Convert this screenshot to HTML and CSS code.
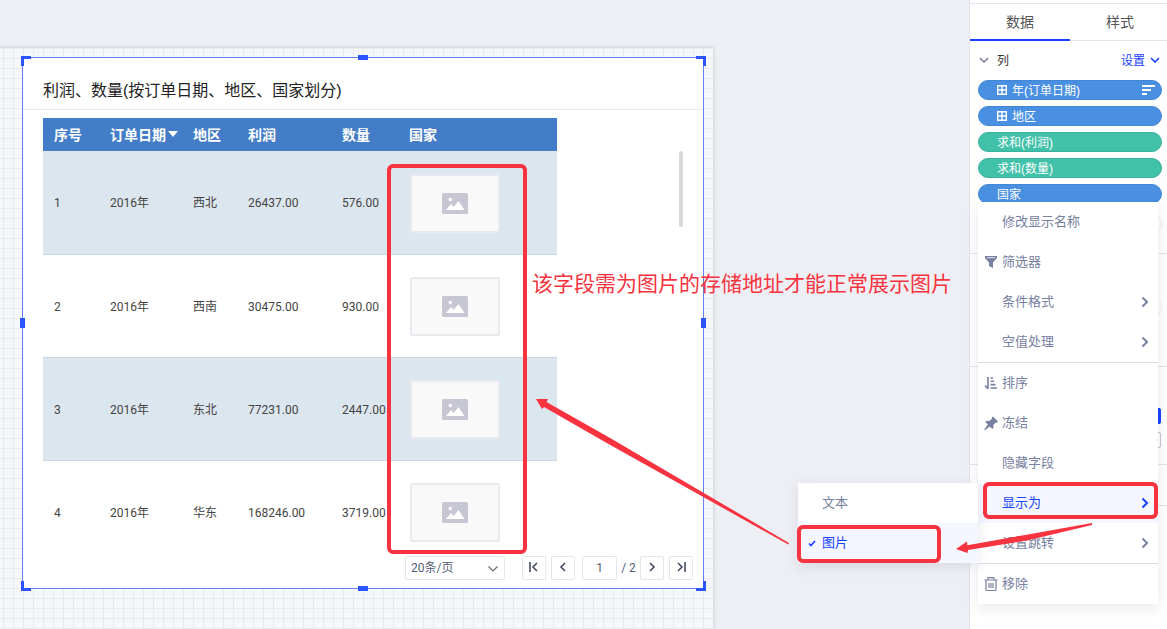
FILE: index.html
```html
<!DOCTYPE html>
<html lang="zh-CN">
<head>
<meta charset="utf-8">
<title>利润、数量</title>
<link rel="stylesheet" href="styles.css">
</head>
<body>
<svg class="defs" aria-hidden="true">
  <symbol id="chev-right" viewBox="0 0 8 12"><path d="M1.500 1.500L6 6 1.500 10.500" fill="none" stroke="currentColor" stroke-width="2"/></symbol>
  <symbol id="chev-down" viewBox="0 0 10 6"><path d="M1 1l4 4 4-4" fill="none" stroke="currentColor" stroke-width="1.600"/></symbol>
  <symbol id="grid-plus" viewBox="0 0 10 10"><path d="M.7.7h8.600v8.600H.7zM5 1v8M1 5h8" fill="none" stroke="currentColor" stroke-width="1.400"/></symbol>
  <symbol id="picture" viewBox="0 0 26 21"><rect width="26" height="21" rx="1.500" fill="#c7c7d4"/><circle cx="8.300" cy="6.500" r="1.700" fill="#fff"/><path d="M4 17l5-6 2.600 3L16.500 8l6 9z" fill="#fff"/></symbol>
</svg>
<div class="app">
  <main class="canvas">
    <div class="board">
      <section class="widget">
        <h1 class="widget-title">利润、数量(按订单日期、地区、国家划分)</h1>
        <div class="table-area">
          <table class="data">
            <colgroup><col class="c-no"><col class="c-date"><col class="c-area"><col class="c-profit"><col class="c-qty"><col class="c-country"></colgroup>
            <thead><tr><th>序号</th><th>订单日期<svg class="caret" viewBox="0 0 10 6"><path d="M0 0h10L5 6z" fill="#fff"/></svg></th><th>地区</th><th>利润</th><th>数量</th><th>国家</th></tr></thead>
            <tbody>
              <tr><td>1</td><td>2016年</td><td>西北</td><td>26437.00</td><td>576.00</td><td><div class="thumb"><svg><use href="#picture"/></svg></div></td></tr>
              <tr><td>2</td><td>2016年</td><td>西南</td><td>30475.00</td><td>930.00</td><td><div class="thumb"><svg><use href="#picture"/></svg></div></td></tr>
              <tr><td>3</td><td>2016年</td><td>东北</td><td>77231.00</td><td>2447.00</td><td><div class="thumb"><svg><use href="#picture"/></svg></div></td></tr>
              <tr><td>4</td><td>2016年</td><td>华东</td><td>168246.00</td><td>3719.00</td><td><div class="thumb"><svg><use href="#picture"/></svg></div></td></tr>
            </tbody>
          </table>
          <div class="scroll-thumb"></div>
        </div>
        <nav class="pager" aria-label="分页">
          <div class="size"><select aria-label="每页条数"><option>20条/页</option></select><svg class="size-arrow" viewBox="0 0 10 6"><path d="M.5.5L5 5 9.500.5" fill="none" stroke="#666" stroke-width="1.100"/></svg></div>
          <div class="pair">
            <button aria-label="首页"><svg viewBox="0 0 10 10"><path d="M1 0v10M8 1L4 5l4 4"/></svg></button>
            <button aria-label="上一页"><svg viewBox="0 0 10 10"><path d="M7 1L3 5l4 4"/></svg></button>
          </div>
          <input class="page-no" aria-label="页码" value="1"><span class="total">/ 2</span>
          <div class="pair">
            <button aria-label="下一页"><svg viewBox="0 0 10 10"><path d="M3 1l4 4-4 4"/></svg></button>
            <button aria-label="末页"><svg viewBox="0 0 10 10"><path d="M9 0v10M2 1l4 4-4 4"/></svg></button>
          </div>
        </nav>
        <i class="corner tl"></i><i class="corner tr"></i><i class="corner bl"></i><i class="corner br"></i>
        <i class="knob top"></i><i class="knob bottom"></i><i class="knob left"></i><i class="knob right"></i>
      </section>
    </div>
  </main>
  <aside class="side">
    <div class="tabs"><button class="tab active">数据</button><button class="tab">样式</button></div>
    <section class="zone columns">
      <div class="zone-head"><svg class="fold"><use href="#chev-down"/></svg><span>列</span><button class="setting">设置<svg class="fold"><use href="#chev-down"/></svg></button></div>
      <div class="pills">
        <button class="pill"><svg class="plus"><use href="#grid-plus"/></svg>年(订单日期)<svg class="sort" viewBox="0 0 13 10"><path d="M0 1h13M0 5h9M0 9h5" stroke="#fff" stroke-width="2"/></svg></button>
        <button class="pill"><svg class="plus"><use href="#grid-plus"/></svg>地区</button>
        <button class="pill measure">求和(利润)</button>
        <button class="pill measure">求和(数量)</button>
        <button class="pill">国家</button>
      </div>
      <div class="drop"></div>
    </section>
    <section class="zone filter"><div class="drop"></div></section>
    <section class="zone options"><i class="option on"></i><i class="option"></i></section>
    <section class="zone short"></section>
    <div class="menu">
      <button class="item">修改显示名称</button>
      <button class="item"><svg class="icon" viewBox="0 0 14 16"><path d="M1 2h12v2L9 8.500V14l-4-2V8.500L1 4z" fill="currentColor"/><path d="M3 3.700h8" stroke="#fff" stroke-width=".8"/></svg>筛选器</button>
      <button class="item">条件格式<svg class="more"><use href="#chev-right"/></svg></button>
      <button class="item">空值处理<svg class="more"><use href="#chev-right"/></svg></button>
      <hr>
      <button class="item"><svg class="icon" viewBox="0 0 14 16"><path d="M4 2v11.500M1 10.500l3 3.500M6.500 3H9M6.500 6.300h3.500M6.500 9.600h5M6.500 13H13" fill="none" stroke="currentColor" stroke-width="1.600"/></svg>排序</button>
      <button class="item"><svg class="icon" viewBox="0 0 14 16"><path d="M9 1.500l5 5-1.200 1.200-1-.2-2.500 2.500.2 2.800-1.200 1.200-2.600-2.600L.8 15.200l-.6-.6 3.700-5L1.300 7l1.200-1.200 2.800.2 2.700-2.500-.2-1z" fill="currentColor"/></svg>冻结</button>
      <button class="item">隐藏字段</button>
      <div class="branch">
        <button class="item active">显示为<svg class="more"><use href="#chev-right"/></svg></button>
        <div class="submenu">
          <button class="item">文本</button>
          <button class="item active"><svg class="tick" viewBox="0 0 8 7"><path d="M1 3.500l2 2L7 1" fill="none" stroke="currentColor" stroke-width="1.700"/></svg>图片</button>
        </div>
      </div>
      <button class="item">设置跳转<svg class="more"><use href="#chev-right"/></svg></button>
      <hr>
      <button class="item"><svg class="icon" viewBox="0 0 14 16"><path d="M.5 4h13M4 4V1.700h6V4M2 4v9.500q0 1 1 1h8q1 0 1-1V4M5 7v5M7 7v5M9 7v5" fill="none" stroke="currentColor" stroke-width="1.200"/></svg>移除</button>
    </div>
  </aside>
</div>
<div class="notes">
  <svg class="marks" width="1167" height="629" aria-hidden="true">
    <g fill="none" stroke="#f83340" stroke-width="4"><rect x="389" y="166" width="136" height="386" rx="4"/><rect x="799" y="527" width="140" height="34" rx="4"/><rect x="985" y="484" width="171" height="33" rx="4"/></g>
    <g fill="#f83340"><path d="M536 399l12 0-1.500 3L611 438.500 789 543l-.7 1.500L608.500 444 544 407l-2 2z"/><path d="M956 549l11-7.500.3 3.700L1025 535l67-12v2l-65 15.500-59 9.500-.5 3z"/></g>
  </svg>
  <p class="note">该字段需为图片的存储地址才能正常展示图片</p>
</div>
</body>
</html>
```
FILE: styles.css
```css
* { box-sizing: border-box; }
body { margin: 0; font-family: "Liberation Sans", "Noto Sans CJK SC", sans-serif; font-size: 12px; color: #333; }
button, input, select { font: inherit; color: inherit; margin: 0; border: 0; padding: 0; background: none; }
svg { flex: none; }
.defs { position: absolute; width: 0; height: 0; }
.app { display: flex; height: 100vh; overflow: hidden; }

.canvas { flex: 1; display: flex; background: #eeeff4; padding: 48px 256px 0 0; }
.board { flex: 1; display: flex; padding: 9px 9px 40px 22px; background-color: #f6f7fb; background-image: linear-gradient(#e8eaef 1px, transparent 1px), linear-gradient(90deg, #e8eaef 1px, transparent 1px); background-size: 10px 10px; background-position: 3px 0; box-shadow: 0 0 4px #0003; }
.widget { position: relative; flex: 1; display: flex; flex-direction: column; background: #fff; border: 1px solid #6583ee; }
.widget-title { margin: 0; padding: 21px 20px 6px; font-size: 16px; line-height: 24px; font-weight: 400; color: #222; border-bottom: 1px solid #e8e8e8; }
.table-area { flex: 1; min-height: 0; overflow: hidden; display: flex; justify-content: space-between; padding: 8px 20px 0; }
.data { table-layout: fixed; width: 514px; height: 445px; border-collapse: collapse; font-family: Roboto, "Noto Sans CJK SC", sans-serif; }
.c-no { width: 56px; } .c-date { width: 83px; } .c-area { width: 55px; } .c-profit { width: 94px; } .c-qty { width: 67px; }
.data th { height: 33px; padding: 0 0 0 11px; background: #447dc7; color: #fff; font-size: 14px; line-height: 20px; text-align: left; white-space: nowrap; }
.data td { height: 103px; padding: 2px 0 0 11px; line-height: 18px; border-bottom: 1px solid #ccd8e4; color: #444; }
.data tr:nth-child(even) td { background: #fff; }
.data tbody tr:nth-child(odd) td { background: #dce6ee; }
.caret { width: 10px; height: 6px; margin-left: 2px; vertical-align: 3px; }
.thumb { width: 90px; height: 59px; margin-left: 1px; display: flex; align-items: center; justify-content: center; background: #f9f9f9; border: 2px solid #e9e9f0; border-radius: 2px; }
.thumb svg { width: 26px; height: 21px; }
.scroll-thumb { width: 4px; height: 76px; margin-top: 33px; border-radius: 2px; background: #d9d9d9; }
.pager { display: flex; align-items: center; justify-content: flex-end; padding: 0 10px 8px; font-size: 12px; font-family: Roboto, "Noto Sans CJK SC", sans-serif; color: #555c75; }
.pager button, .page-no, .size select { height: 24px; border: 1px solid #e6e6ea; border-radius: 2px; background: #fff; }
.size { position: relative; width: 100px; margin-right: 17px; display: flex; }
.size select { appearance: none; flex: 1; padding: 0 5px; }
.size-arrow { position: absolute; right: 7px; top: 10px; width: 10px; height: 6px; }
.pair { display: flex; gap: 5px; }
.pager button { width: 24px; display: flex; align-items: center; justify-content: center; padding-bottom: 2px; }
.pager button svg { width: 10px; height: 10px; fill: none; stroke: #444b60; stroke-width: 1.600; }
.page-no { width: 35px; margin-left: 7px; text-align: center; }
.total { width: 23px; text-align: center; white-space: nowrap; }
.corner { position: absolute; width: 10px; height: 10px; border: 0 solid #2b56ff; }
.tl { left: -2px; top: -2px; border-width: 3px 0 0 3px; }
.tr { right: -3px; top: -2px; border-width: 3px 3px 0 0; }
.bl { left: -2px; bottom: -3px; border-width: 0 0 3px 3px; }
.br { right: -3px; bottom: -3px; border-width: 0 3px 3px 0; }
.knob { position: absolute; background: #2b56ff; }
.top, .bottom { width: 10px; height: 5px; left: calc(50% - 5px); }
.top { top: -3px; } .bottom { bottom: -3px; }
.left, .right { width: 5px; height: 10px; top: calc(50% - 5px); }
.left { left: -3px; } .right { right: -3px; }

.side { position: relative; width: 198px; flex: none; border-left: 1px solid #e2e3ea; background: #fff; padding-top: 3px; }
.tabs { display: flex; height: 38px; border-top: 1px solid #e4e4ec; border-bottom: 1px solid #e4e4ec; }
.tab { flex: none; width: 100px; height: 37px; padding-bottom: 3px; font-size: 14px; color: #555; }
.tab.active { border-bottom: 2px solid #1742ff; padding-bottom: 1px; }
.zone { border-bottom: 1px solid #e4e4ec; padding: 0 5px 0 8px; }
.columns { height: 213px; }
.zone-head { display: flex; align-items: center; gap: 8px; height: 39px; padding-bottom: 2px; }
.fold { width: 10px; height: 6px; color: #777f99; margin-left: 1px; }
.setting { margin-left: auto; display: flex; align-items: center; gap: 5px; color: #1742ff; }
.setting .fold { color: #1742ff; margin-right: 2px; margin-left: 0; }
.pills { display: flex; flex-direction: column; gap: 6px; }
.pill { display: flex; align-items: center; gap: 5px; height: 20px; padding: 0 8px 2px 18px; border: 1px solid #4386d6; border-radius: 10px; background: #4a90e2; color: #fff; text-align: left; }
.pill.measure { background: #41c1a9; border-color: #3ab19a; }
.pill svg { margin-top: 2px; }
.plus { width: 10px; height: 10px; }
.sort { width: 13px; height: 10px; margin-left: auto; margin-right: -2px; }
.drop { height: 20px; margin-top: 10px; border: 1px dotted #ddd; border-radius: 10px; }
.filter { height: 113px; padding-top: 33px; }
.options { height: 98px; padding-top: 41px; padding-right: 6px; display: flex; flex-direction: column; align-items: flex-end; gap: 8px; }
.option { width: 16px; height: 16px; border: 1px solid #c2c4d0; border-radius: 2px; }
.option.on { background: #1742ff; border-color: #1742ff; }
.short { height: 41px; }

.menu { position: absolute; left: 8px; right: 9px; top: 202px; background: #fff; box-shadow: 0 4px 12px #2228491a; color: #7780a0; font-size: 13px; }
.item { position: relative; display: flex; align-items: center; width: 100%; height: 40px; padding: 0 9px 4px 24px; text-align: left; }
.item svg { margin-top: 4px; }
.item.active { background: #f4f7ff; color: #1742ff; }
.menu hr { margin: 0; border: 0; border-top: 1px solid #dcdde2; }
.icon { position: absolute; left: 6px; width: 14px; height: 16px; }
.more { width: 8px; height: 12px; margin-left: auto; }
.branch { position: relative; }
.submenu { position: absolute; right: 100%; top: 0; width: 100%; background: #fff; box-shadow: 0 4px 12px #2228491a; }
.tick { position: absolute; left: 10px; width: 8px; height: 7px; }

.notes { position: absolute; left: 0; top: 0; pointer-events: none; }
.marks { display: block; }
.note { position: absolute; left: 532px; top: 268px; margin: 0; font-size: 21px; line-height: 32px; white-space: nowrap; color: #f83340; font-weight: 400; }
```
